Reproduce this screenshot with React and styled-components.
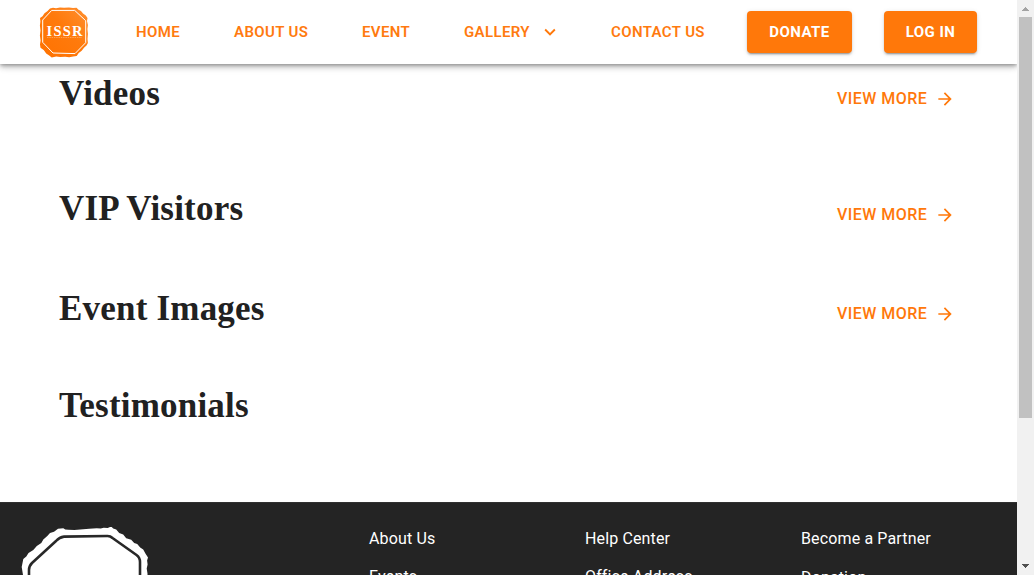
import React from "react";
import styled, { createGlobalStyle } from "styled-components";

const GlobalStyle = createGlobalStyle`
  * { box-sizing: border-box; }
  html, body { margin: 0; padding: 0; overflow: hidden; background: #fff; }
  body { font-family: Roboto, "Liberation Sans", sans-serif; color: #212121; }
`;

const Screen = styled.div`
  display: flex;
  width: 1034px;
  height: 575px;
  overflow: hidden;
`;

const Page = styled.div`
  display: flex;
  flex-direction: column;
  width: 1017px;
  height: 575px;
  overflow: hidden;
`;

const Header = styled.header`
  display: flex;
  align-items: center;
  flex: none;
  height: 64px;
  padding-left: 38px;
  background: #fff;
  box-shadow: 0 2px 4px -1px rgba(0, 0, 0, 0.2), 0 4px 5px rgba(0, 0, 0, 0.14),
    0 1px 10px rgba(0, 0, 0, 0.12), 0 1px 3px rgba(0, 0, 0, 0.15);
  z-index: 1;
`;

const LogoBox = styled.div`
  flex: none;
  width: 98px;
  height: 52px;
`;

const NavLink = styled.a`
  display: flex;
  align-items: center;
  flex: none;
  width: ${(p) => p.$width}px;
  font-size: 15px;
  font-weight: 600;
  line-height: 24px;
  letter-spacing: 0.38px;
  white-space: nowrap;
  color: #ff7a0f;
`;

const Chevron = styled.svg`
  margin-left: 9px;
  width: 22px;
  height: 22px;
`;

const HeaderButton = styled.button`
  flex: none;
  width: ${(p) => p.$width}px;
  height: 42px;
  margin: 0 32px 0 0;
  padding: 0;
  border: 0;
  border-radius: 4px;
  background: #ff780a;
  color: #fff;
  font-family: inherit;
  font-size: 15px;
  font-weight: 700;
  letter-spacing: 0.43px;
  box-shadow: 0 3px 1px -2px rgba(0, 0, 0, 0.2), 0 2px 2px rgba(0, 0, 0, 0.14),
    0 1px 5px rgba(0, 0, 0, 0.12);
`;

const Main = styled.main`
  flex: none;
  height: 438px;
  padding: 0 64px 0 59px;
`;

const Section = styled.section`
  display: flex;
  justify-content: space-between;
  align-items: flex-start;
  height: ${(p) => p.$height}px;
  padding-top: 10px;
`;

const Title = styled.h2`
  margin: 0;
  font-family: "Liberation Serif", serif;
  font-size: 35px;
  font-weight: 700;
  line-height: 40px;
  letter-spacing: 0.2px;
  white-space: nowrap;
`;

const ViewMore = styled.a`
  display: flex;
  align-items: center;
  gap: 8px;
  margin-top: ${(p) => p.$drop}px;
  width: 116px;
  height: 24px;
  font-size: 16px;
  font-weight: 500;
  letter-spacing: 0.46px;
  white-space: nowrap;
  color: #ff780a;
`;

const MoreLabel = styled.span`
  padding-bottom: 2px;
`;

const Arrow = styled.svg`
  flex: none;
  width: 20px;
  height: 20px;
`;

const Footer = styled.footer`
  display: flex;
  flex: none;
  height: 73px;
  padding-left: 20px;
  overflow: hidden;
  background: #242424;
  border-top: 1px solid #303030;
`;

const FooterLogo = styled.div`
  flex: none;
  width: 349px;
  padding-top: 24px;
`;

const FooterColumn = styled.div`
  display: flex;
  flex-direction: column;
  flex: none;
  gap: ${(p) => p.$gap}px;
  width: 216px;
  padding-top: 24px;
  font-size: 16px;
  line-height: 24px;
  letter-spacing: 0.14px;
  color: #fff;
`;

const Scrollbar = styled.div`
  display: flex;
  flex-direction: column;
  align-items: center;
  width: 17px;
  height: 575px;
  background: #f1f1f1;
`;

const ScrollArrow = styled.svg`
  flex: none;
  width: 17px;
  height: 17px;
`;

const Track = styled.div`
  flex: 1;
  width: 13px;
`;

const Thumb = styled.div`
  height: 401px;
  background: #c1c1c1;
`;

function BrandLogo() {
  return (
    <svg width="52" height="52" viewBox="0 0 52 52">
      <defs>
        <linearGradient id="brand" x1="0" x2="1" y1="1" y2="0">
          <stop offset="0" stopColor="#ff7200" />
          <stop offset=".55" stopColor="#ff7a0c" />
          <stop offset="1" stopColor="#ff9030" />
        </linearGradient>
      </defs>
      <path
        d="M12 2.500l3-.7 3 .4 4-.8 4 .4 5-.4 4 .6 3.500-.3 2 2 2.500 1.300 2 2.500 2.800 2 1.700 2.500-.5 3 .9 4-.5 4 .5 5-.4 5 .4 4-1.400 2.500-2.500 2.300-2.300 3-3 2.200-2 3-3.500.6-4 .7-4-.6-5 .4-4-.5-4.500.8-2.500-2-3-2-2.500-3.300-3.200-2.300L2 38.500l.6-4-.7-5 .6-5-.6-5 .5-4-.4-3.500 2.500-1.700 2-3 2.800-2z"
        fill="url(#brand)"
      />
      <path
        d="M13.700 4.400h23l11 10.300v22L37 47.600l-22-.6L4.700 36.300V14z"
        fill="none"
        stroke="#fff"
        strokeWidth="1"
        strokeLinejoin="round"
      />
      <text
        x="8.500"
        y="30"
        textLength="36"
        fill="#fff"
        fontFamily="Liberation Serif, serif"
        fontWeight="700"
        fontSize="14.500"
      >
        ISSR
      </text>
      <path d="M9 31.700h35" stroke="#fff" strokeWidth=".6" strokeDasharray="1.500 .8" opacity=".6" />
    </svg>
  );
}

function FooterBadge() {
  return (
    <svg width="132" height="132" viewBox="0 0 132 132">
      <path
        d="M3 132V48L1.700 40l.6-3 1-5 3-2.500 2.200-3.500 4.800-3 3.500-4 4.500-3 2-3.500 4-3.500 2.700-3 4-1.200 4-3 5.300-.6 2 1.300 3 .2 6 .2 9-.6 6-.6 7.400-.5 4 .4 3-.8 4 .2 3.500-1.500 2 2 3 1.100 3 3.400 4 1.600 3 3.700 5 1.400 3 3.200 3 1 3 3.500 3 2 2.500 4.600 2.300 3.400-.9 3 .5 4-.9 4 .8 5V132z"
        fill="#fff"
      />
      <path
        d="M9 132V43q0-4 3-7L36 14q3.500-4 8-4.400l43.500-.6q3 0 5 2l24 17q3.500 2.500 3.500 7v97"
        fill="none"
        stroke="#282828"
        strokeWidth="2.600"
        strokeLinejoin="round"
      />
    </svg>
  );
}

function MoreLink({ drop }) {
  return (
    <ViewMore $drop={drop}>
      <MoreLabel>VIEW MORE</MoreLabel>
      <Arrow viewBox="0 0 24 24" fill="#ff780a">
        <path d="m12 4-1.410 1.410L16.170 11H4v2h12.170l-5.580 5.590L12 20l8-8z" />
      </Arrow>
    </ViewMore>
  );
}

export default function App() {
  return (
    <>
      <GlobalStyle />
      <Screen>
        <Page>
          <Header>
            <LogoBox>
              <BrandLogo />
            </LogoBox>
            <NavLink $width={98}>HOME</NavLink>
            <NavLink $width={128}>ABOUT US</NavLink>
            <NavLink $width={102}>EVENT</NavLink>
            <NavLink $width={147}>
              GALLERY
              <Chevron viewBox="0 0 24 24" fill="#ff780a">
                <path d="M7.410 8.590 12 13.170l4.590-4.580L18 10l-6 6-6-6z" />
              </Chevron>
            </NavLink>
            <NavLink $width={136}>CONTACT US</NavLink>
            <HeaderButton $width={105}>DONATE</HeaderButton>
            <HeaderButton $width={93}>LOG IN</HeaderButton>
          </Header>
          <Main>
            <Section $height={115}>
              <Title>Videos</Title>
              <MoreLink drop={13} />
            </Section>
            <Section $height={100}>
              <Title>VIP Visitors</Title>
              <MoreLink drop={14} />
            </Section>
            <Section $height={97}>
              <Title>Event Images</Title>
              <MoreLink drop={13} />
            </Section>
            <Section $height={126}>
              <Title>Testimonials</Title>
            </Section>
          </Main>
          <Footer>
            <FooterLogo>
              <FooterBadge />
            </FooterLogo>
            <FooterColumn $gap={14}>
              <span>About Us</span>
              <span>Events</span>
            </FooterColumn>
            <FooterColumn $gap={14}>
              <span>Help Center</span>
              <span>Office Address</span>
            </FooterColumn>
            <FooterColumn $gap={15}>
              <span>Become a Partner</span>
              <span>Donation</span>
            </FooterColumn>
          </Footer>
        </Page>
        <Scrollbar>
          <ScrollArrow viewBox="0 0 17 17" shapeRendering="crispEdges">
            <path d="M5 11l3.500-4 3.500 4z" fill="#a3a3a3" />
          </ScrollArrow>
          <Track>
            <Thumb />
          </Track>
          <ScrollArrow viewBox="0 0 17 17" shapeRendering="crispEdges">
            <path d="M5 6l3.500 4L12 6z" fill="#505050" />
          </ScrollArrow>
        </Scrollbar>
      </Screen>
    </>
  );
}
